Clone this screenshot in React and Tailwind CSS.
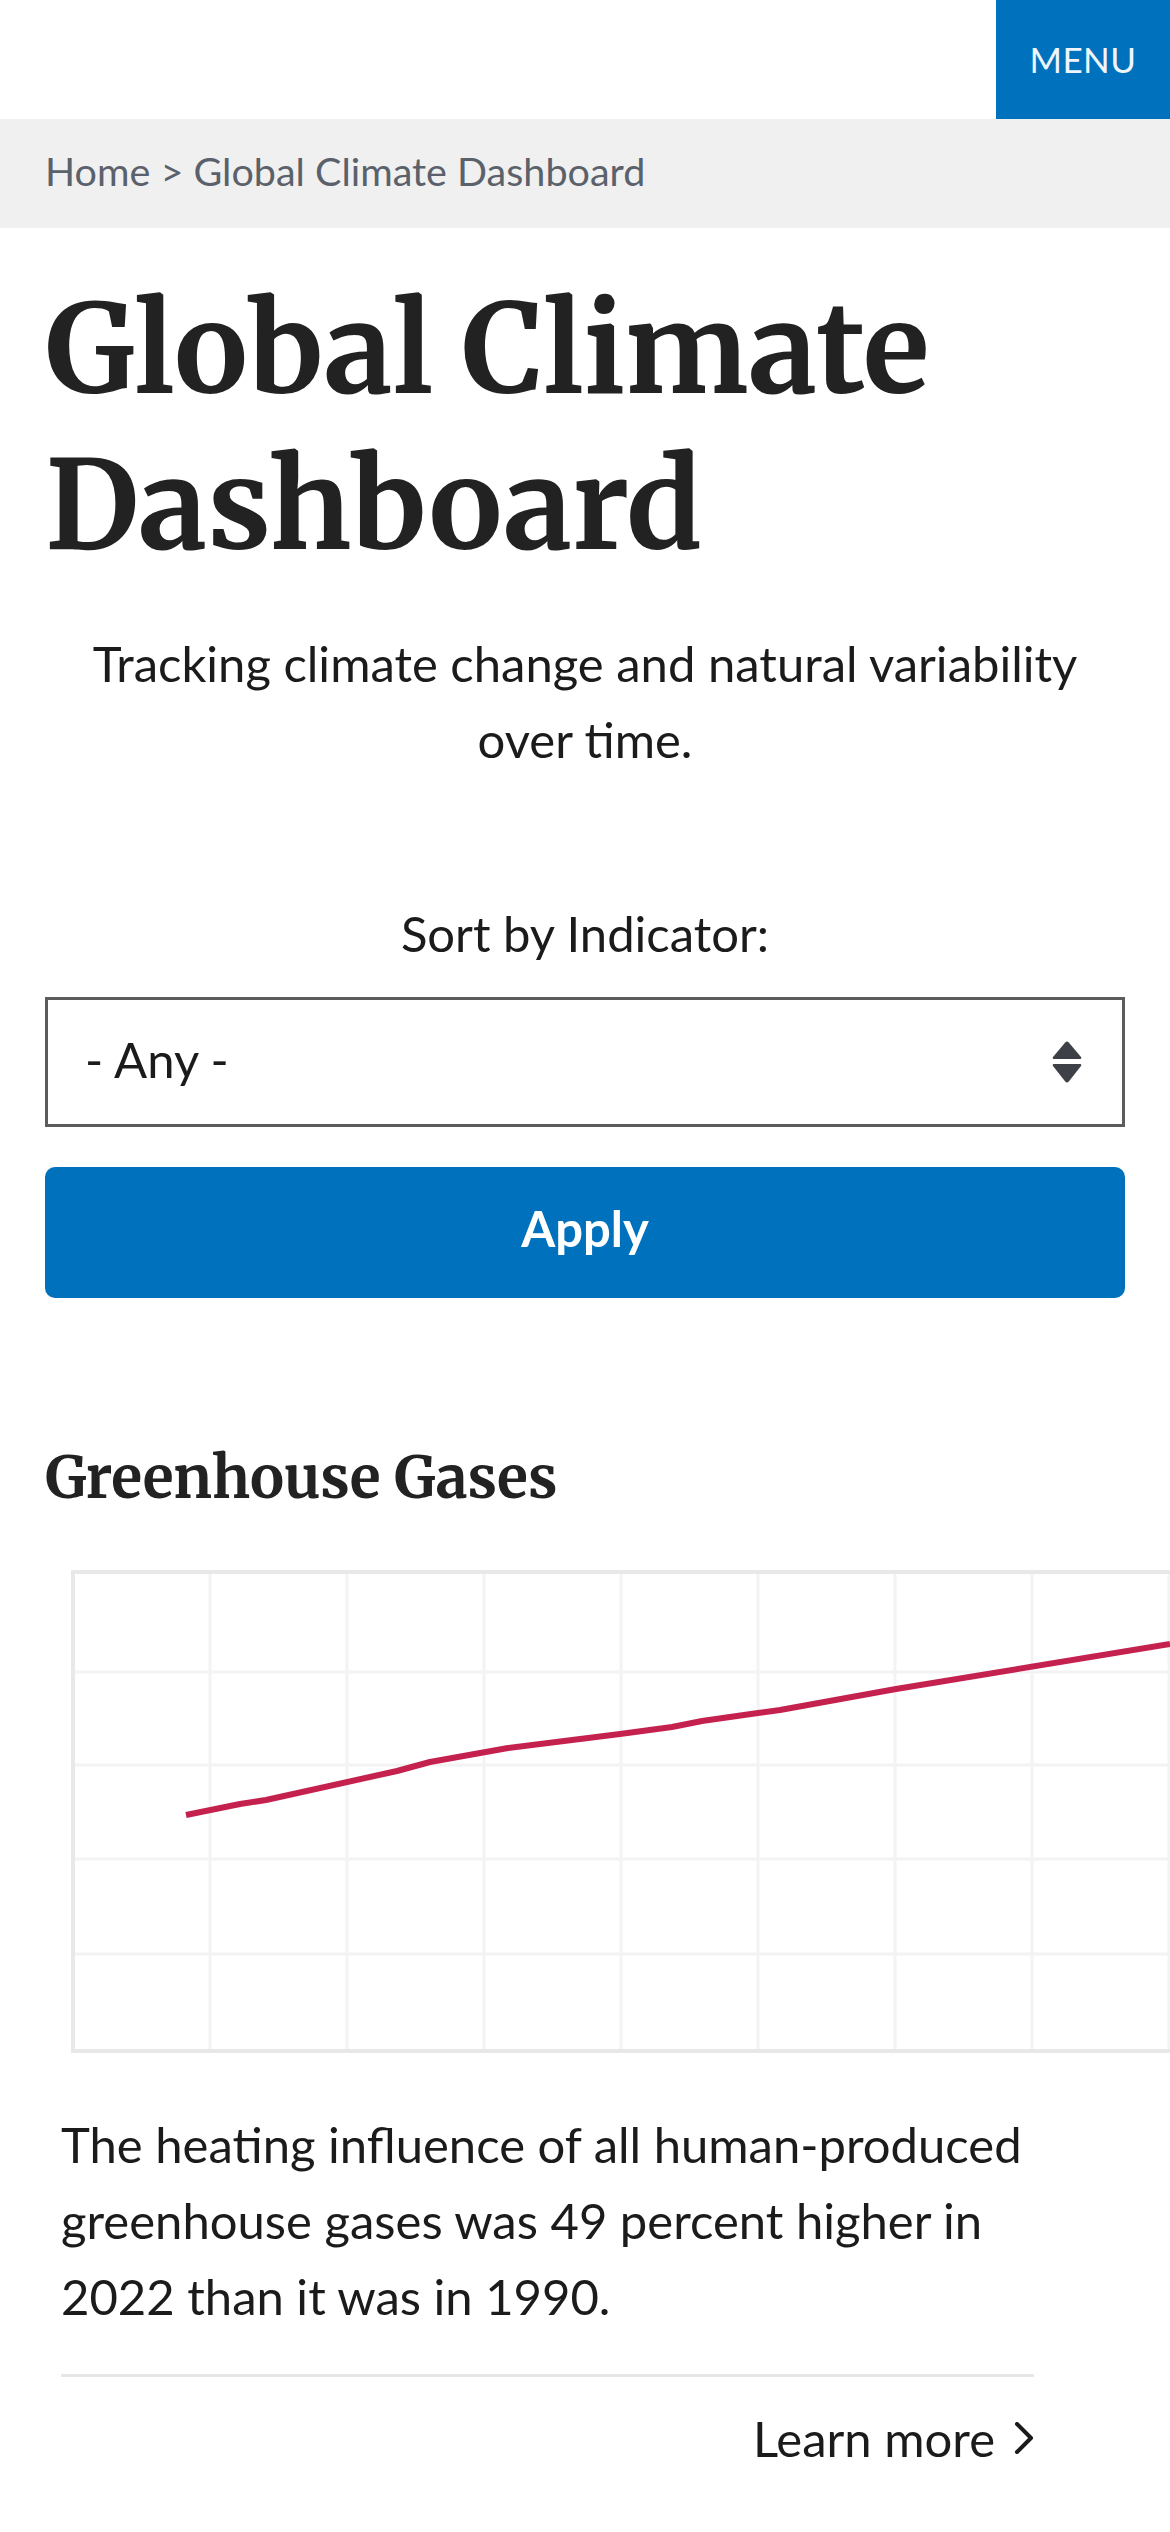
import React from "react";

function SortIcon() {
  return (
    <svg width="30" height="42" viewBox="0 0 30 42" aria-hidden="true">
      <path d="M13.2 1.6 Q15 -0.4 16.8 1.6 L29 16 Q30 18 28 18 L2 18 Q0 18 1 16 Z" fill="#3d4047" />
      <path d="M2 23 L28 23 Q30 23 29 25 L16.8 40.4 Q15 42.4 13.2 40.4 L1 25 Q0 23 2 23 Z" fill="#3d4047" />
    </svg>
  );
}

function Chevron() {
  return (
    <svg width="20" height="32" viewBox="0 0 20 32" aria-hidden="true">
      <path d="M3 2 L17 16 L3 30" fill="none" stroke="#1b1b1b" strokeWidth="4" strokeLinecap="round" strokeLinejoin="round" />
    </svg>
  );
}

function Chart() {
  const cols = [];
  for (let x = 139; x < 1100; x += 137) cols.push(x);
  const rows = [102, 195, 289, 384];
  const pts = [
    [115, 245], [169, 234], [195, 230], [326, 201], [359, 192], [437, 178], [549, 164],
    [601, 157], [631, 151], [687, 143], [709, 140], [825, 119], [1099, 74],
  ];
  return (
    <svg width="1100" height="483" viewBox="0 0 1100 483" className="block shrink-0">
      <rect x="0" y="0" width="1100" height="483" fill="#ffffff" />
      {cols.map((x) => (
        <line key={"c" + x} x1={x} y1="0" x2={x} y2="483" stroke="#f3f3f3" strokeWidth="3" />
      ))}
      {rows.map((y) => (
        <line key={"r" + y} x1="0" y1={y} x2="1100" y2={y} stroke="#f3f3f3" strokeWidth="3" />
      ))}
      <rect x="2" y="2" width="1100" height="479" fill="none" stroke="#e8e8e8" strokeWidth="4" />
      <polyline
        points={pts.map((p) => p.join(",")).join(" ")}
        fill="none"
        stroke="#c5214f"
        strokeWidth="6"
        strokeLinejoin="round"
      />
    </svg>
  );
}

export default function App() {
  return (
    <div className="w-[1170px] min-h-[2532px] overflow-hidden bg-white text-[#1b1b1b] font-['Lato',sans-serif]">
      <header className="h-[119px] flex justify-end">
        <button className="w-[174px] h-[119px] bg-[#0071bc] text-[#eef5fb] text-[35px] leading-[43px] tracking-[0.5px] flex items-center justify-center">
          MENU
        </button>
      </header>

      <nav className="h-[109px] bg-[#f0f0f0] px-[45px] flex items-center pb-[6px]">
        <span className="text-[39.5px] leading-[48px] text-[#5b616b]">Home &gt; Global Climate Dashboard</span>
      </nav>

      <main className="px-[45px]">
        <h1 className="mt-[44px] font-['Merriweather',serif] font-bold text-[123px] leading-[156px] text-[#222222]">
          Global Climate Dashboard
        </h1>

        <p className="mt-[41px] text-center text-[49px] leading-[76px]">
          Tracking climate change and natural variability over time.
        </p>

        <label className="block mt-[118px] text-center text-[49px] leading-[76px]">Sort by Indicator:</label>

        <div className="mt-[26px] h-[130px] border-[3px] border-[#5c5c5c] flex items-center justify-between pl-[37px] pr-[40px]">
          <span className="text-[49px] leading-[59px] pb-[6px]">- Any -</span>
          <SortIcon />
        </div>

        <button className="mt-[40px] w-full h-[131px] rounded-[10px] bg-[#0071bc] text-white font-bold text-[49px] leading-[59px] flex items-center justify-center pb-[8px]">
          Apply
        </button>

        <h2 className="mt-[143px] font-['Merriweather',serif] font-bold text-[57px] leading-[74px] text-[#222222]">
          Greenhouse Gases
        </h2>

        <section className="mt-[55px]">
          <div className="pl-[26px]">
            <Chart />
          </div>

          <div className="px-[16px] w-[1005px]">
            <p className="mt-[53px] text-[49px] leading-[76px] whitespace-nowrap">
              The heating influence of all human-produced
              <br />
              greenhouse gases was 49 percent higher in
              <br />
              2022 than it was in 1990.
            </p>
            <div className="mt-[40px] border-t-[3px] border-[#e6e6e6] w-[973px]" />
            <div className="mt-[23px] w-[973px] flex justify-end items-center gap-[19px]">
              <span className="text-[49px] leading-[76px]">Learn more</span>
              <Chevron />
            </div>
          </div>
        </section>
      </main>
    </div>
  );
}
